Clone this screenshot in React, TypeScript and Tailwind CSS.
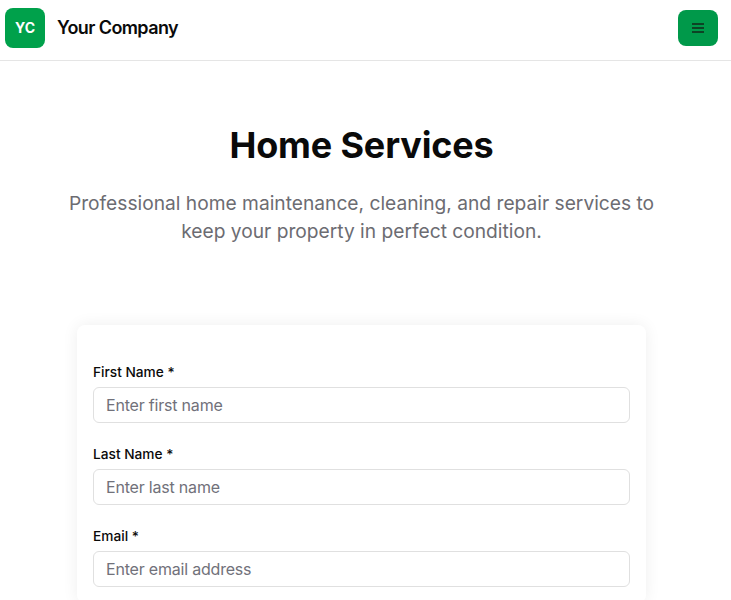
const fields = [
  { label: 'First Name *', placeholder: 'Enter first name', type: 'text' },
  { label: 'Last Name *', placeholder: 'Enter last name', type: 'text' },
  { label: 'Email *', placeholder: 'Enter email address', type: 'email' },
]

export default function App() {
  return (
    <div className="h-[600px] overflow-hidden bg-white font-['Inter',sans-serif] text-[#0a0a0a]">
      <header className="flex h-[61px] items-center justify-between border-b border-[#e5e5e5] pt-2 pr-[13px] pb-3 pl-[5px]">
        <div className="flex items-center gap-3">
          <div className="flex h-10 w-10 items-center justify-center rounded-lg bg-[#00a14b] text-sm font-bold text-white">
            YC
          </div>
          <span className="text-lg font-semibold tracking-[-0.6px]">Your Company</span>
        </div>
        <button className="flex h-9 w-10 items-center justify-center rounded-lg bg-[#00994a]">
          <svg width="12" height="10" viewBox="0 0 12 10" fill="#0d4325">
            <rect x="0" y="0" width="12" height="2" />
            <rect x="0" y="4" width="12" height="2" />
            <rect x="0" y="8" width="12" height="2" />
          </svg>
        </button>
      </header>

      <main className="pr-2">
        <section className="flex flex-col items-center px-4 pt-[60px]">
          <h1 className="text-4xl leading-[48px] font-bold tracking-[-0.15px]">Home Services</h1>
          <p className="mt-5 max-w-[600px] text-center text-[19.2px] leading-7 text-[#6c6c72]">
            Professional home maintenance, cleaning, and repair services to keep your property in perfect condition.
          </p>
        </section>

        <form className="mx-auto mt-[80px] flex w-[569px] flex-col gap-[21px] rounded-lg bg-white px-4 pt-[37px] pb-4 shadow-[0_0_16px_rgba(0,0,0,0.07)]">
          {fields.map((f) => (
            <div key={f.label} className="flex flex-col">
              <label className="mb-[5px] text-[13.7px] leading-[20px] font-medium">{f.label}</label>
              <input
                type={f.type}
                placeholder={f.placeholder}
                className="h-9 rounded-md border border-[#e0e0e0] px-3 text-base tracking-[-0.2px] text-[#0a0a0a] outline-none placeholder:text-[#71717a]"
              />
            </div>
          ))}
        </form>
      </main>
    </div>
  )
}
